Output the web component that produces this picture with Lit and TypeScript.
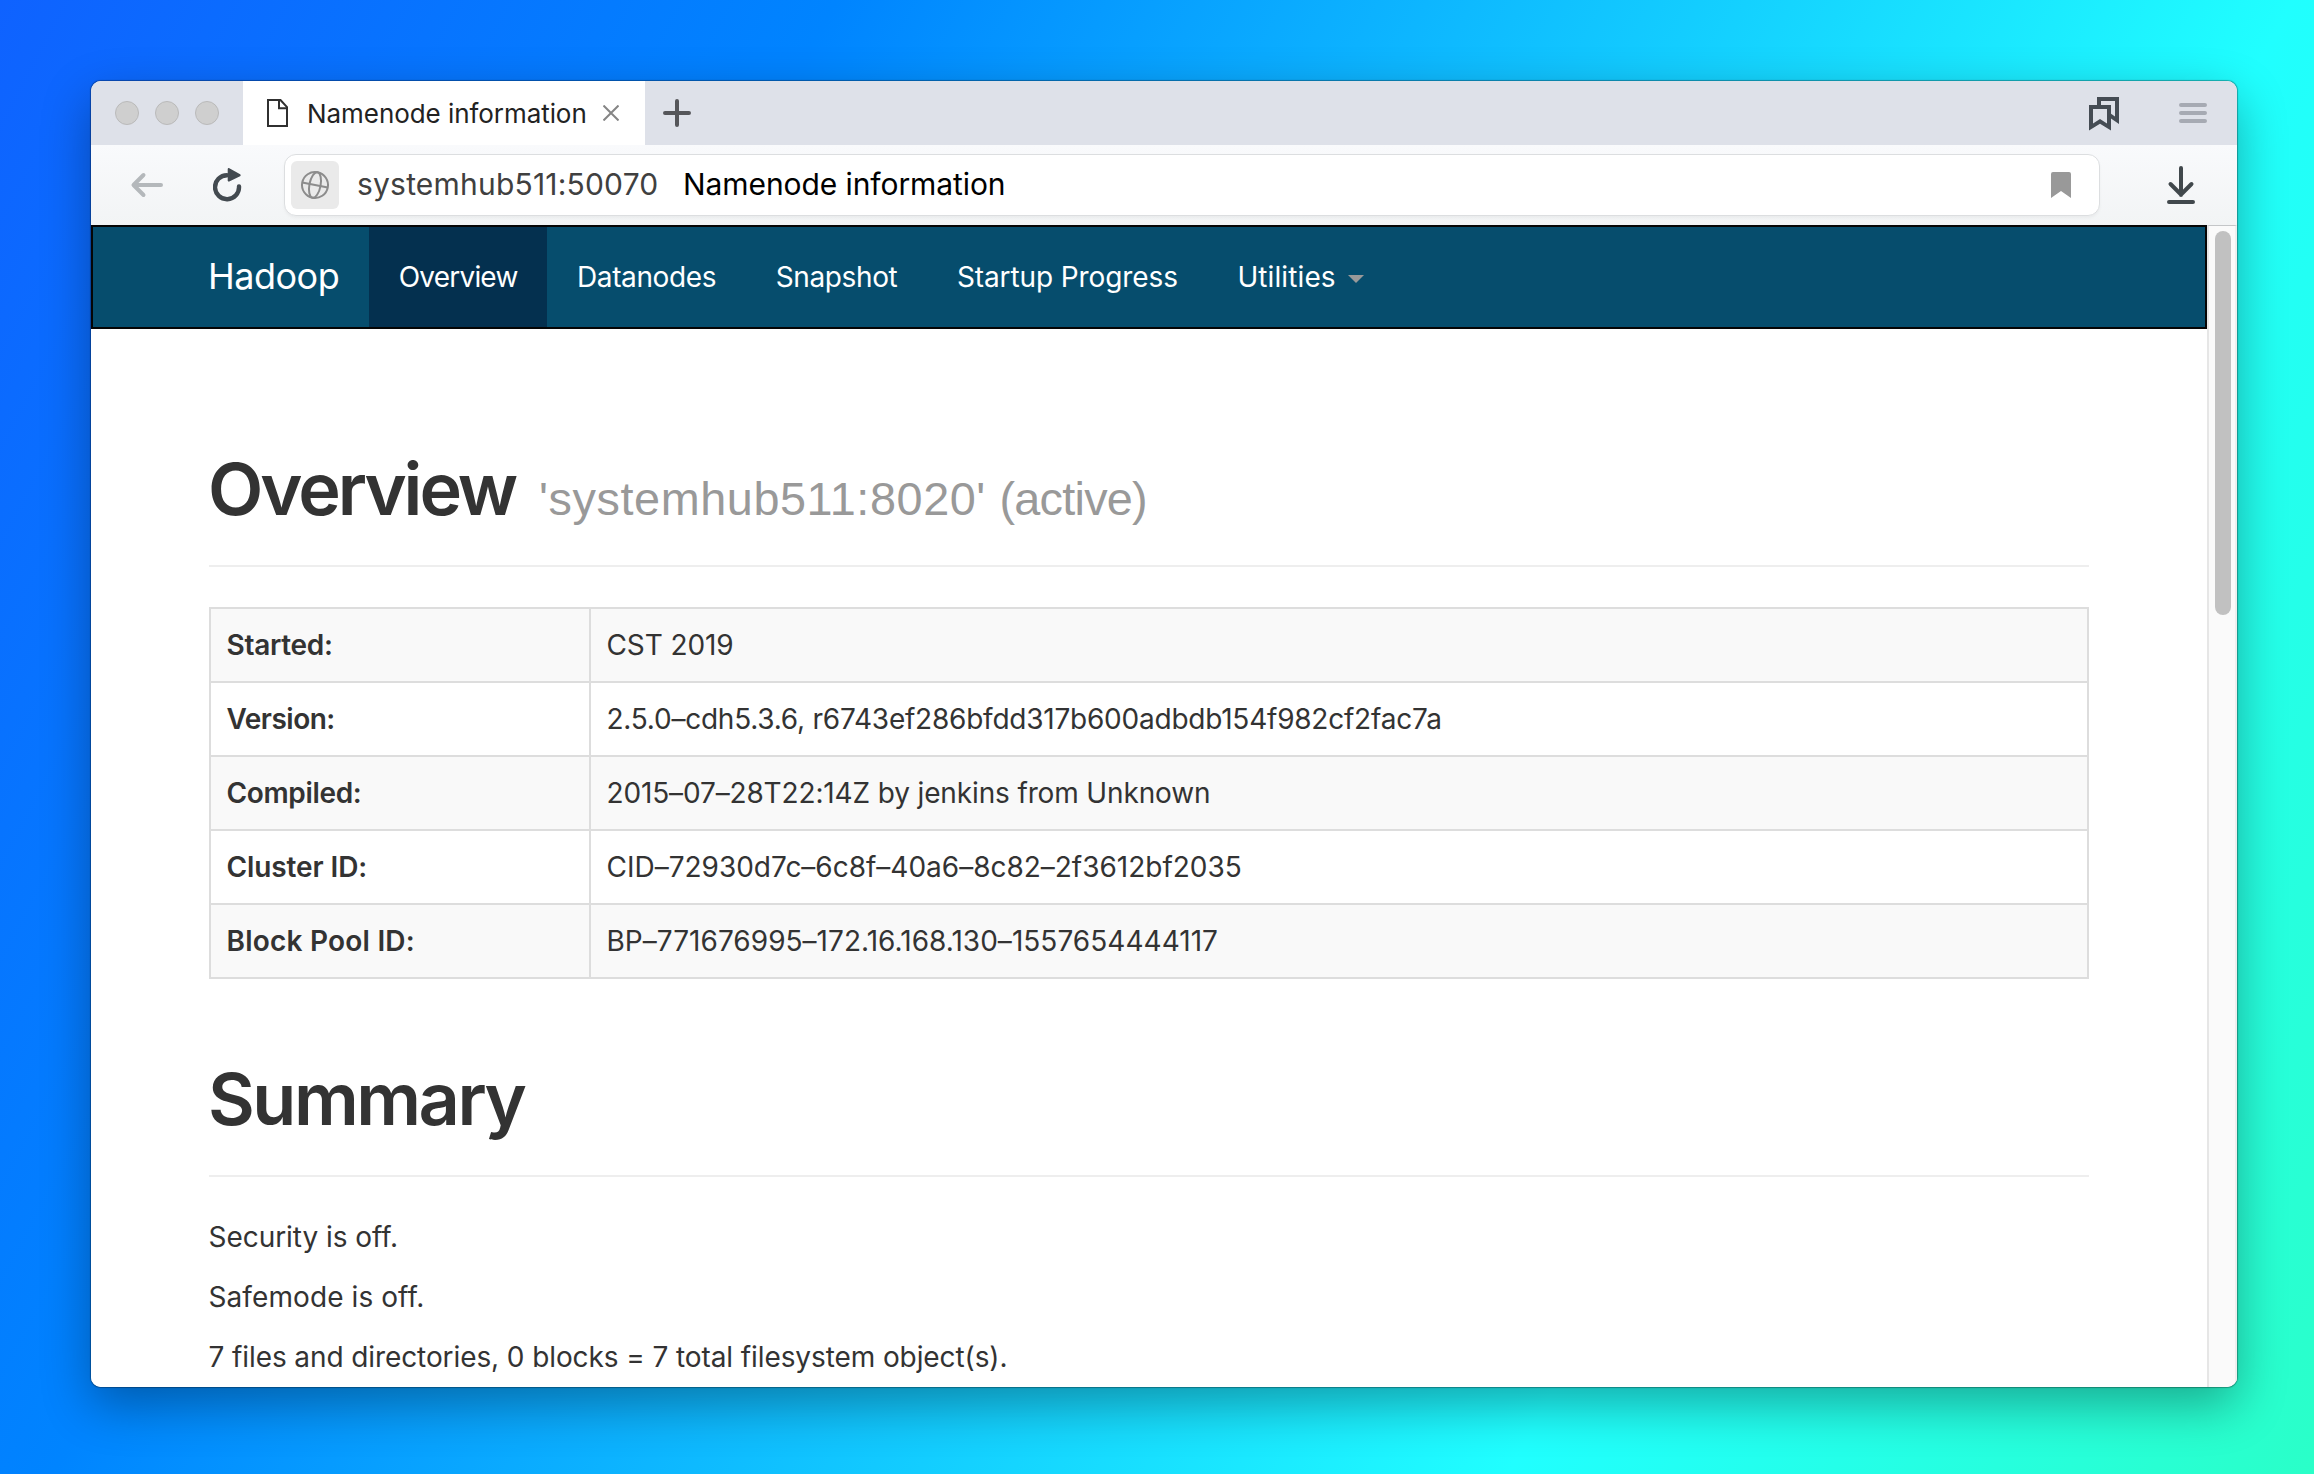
import { LitElement, html, css } from "lit";
import { customElement } from "lit/decorators.js";
import { classMap } from "lit/directives/class-map.js";

interface Label {
  text: string;
  /** letter-spacing in px */
  track: number;
}

const NAV: (Label & { active?: boolean; menu?: boolean })[] = [
  { text: "Overview", track: -0.8, active: true },
  { text: "Datanodes", track: -0.38 },
  { text: "Snapshot", track: -0.36 },
  { text: "Startup Progress", track: -0.1 },
  { text: "Utilities", track: 0.1, menu: true },
];

const ROWS: { name: Label; value: Label }[] = [
  { name: { text: "Started:", track: -0.3 }, value: { text: "CST 2019", track: -0.1 } },
  {
    name: { text: "Version:", track: -0.5 },
    value: { text: "2.5.0–cdh5.3.6, r6743ef286bfdd317b600adbdb154f982cf2fac7a", track: -0.23 },
  },
  {
    name: { text: "Compiled:", track: -0.34 },
    value: { text: "2015–07–28T22:14Z by jenkins from Unknown", track: -0.14 },
  },
  {
    name: { text: "Cluster ID:", track: -0.1 },
    value: { text: "CID–72930d7c–6c8f–40a6–8c82–2f3612bf2035", track: -0.01 },
  },
  {
    name: { text: "Block Pool ID:", track: 0.22 },
    value: { text: "BP–771676995–172.16.168.130–1557654444117", track: 0.03 },
  },
];

const NOTES: Label[] = [
  { text: "Security is off.", track: -0.05 },
  { text: "Safemode is off.", track: 0.09 },
  { text: "7 files and directories, 0 blocks = 7 total filesystem object(s).", track: -0.095 },
];

const spaced = (l: Label) => html`<span style="letter-spacing:${l.track}px">${l.text}</span>`;

@customElement("browser-chrome")
export class BrowserChrome extends LitElement {
  static styles = css`
    :host { display: block; flex: none; font-family: Inter, "Liberation Sans", sans-serif; }
    * { box-sizing: border-box; }
    svg { display: block; flex: none; }
    .tabs { height: 64px; display: flex; align-items: center; background: #dee1e9; }
    .lights { width: 152px; padding-left: 24px; display: flex; gap: 16px; flex: none; }
    .light { width: 24px; height: 24px; border-radius: 50%; background: #cfcfcf; border: 1px solid #bababa; }
    .tab {
      width: 402px; height: 64px; flex: none; display: flex; align-items: center;
      padding-left: 24px; background: #fff; color: #222; font-size: 26px; white-space: nowrap;
    }
    .title { width: 283px; margin-left: 19px; margin-right: 13px; letter-spacing: -.06px; }
    .plus { margin-left: 18px; }
    .right { margin-left: auto; display: flex; align-items: center; gap: 60px; padding-right: 30px; }
    .bookmarks { margin-top: 1px; }
    .bar {
      height: 80px; display: flex; align-items: center;
      background: linear-gradient(#f9fafc, #f2f4f5);
    }
    .back { margin-left: 39px; }
    .reload { margin-left: 50px; }
    .address {
      width: 1816px; height: 62px; margin-left: 41px; flex: none; display: flex; align-items: center;
      padding: 0 28px 0 6px; border: 1px solid #dcdee0; border-radius: 12px; background: #fff;
      box-shadow: 0 2px 3px rgba(0, 0, 0, .04); font-size: 30px; white-space: nowrap;
    }
    .chip {
      width: 48px; height: 48px; flex: none; display: flex; align-items: center; justify-content: center;
      border-radius: 6px; background: #eaeaea;
    }
    .url { margin-left: 18px; width: 326px; padding-bottom: 2px; color: #404040; letter-spacing: .2px; }
    .page { padding-bottom: 2px; color: #000; letter-spacing: -.08px; }
    .mark { margin-left: auto; }
    .download { margin: 0 0 1px 67px; }
  `;

  render() {
    return html`
      <div class="tabs">
        <div class="lights"><i class="light"></i><i class="light"></i><i class="light"></i></div>
        <div class="tab">
          <svg width="21" height="28" fill="none" stroke="#303030" stroke-width="2">
            <path d="M1 1H13.5L20 8.2V27H1Z" />
            <path d="M12 1.5V9.2H19.5" />
          </svg>
          <span class="title">Namenode information</span>
          <svg width="16" height="16" stroke="#858585" stroke-width="2"><path d="M.5 .5L15.5 15.5M15.5 .5L.5 15.5" /></svg>
        </div>
        <svg class="plus" width="28" height="28" stroke="#55565a" stroke-width="4" stroke-linecap="round">
          <path d="M14 2V26M2 14H26" />
        </svg>
        <div class="right">
          <svg class="bookmarks" width="30" height="34" fill="#454c54" fill-rule="evenodd">
            <path d="M0 8H22V33.5L11 26.8L0 33.5ZM4 12V26.4L11 21.9L18 26.4V12Z" />
            <path d="M8 8V0H30V27L22 21.5V16.8L26 19.4V4H12V8Z" />
          </svg>
          <svg width="28" height="20" stroke="#a6aab3" stroke-width="4" stroke-linecap="round">
            <path d="M2 2H26M2 10H26M2 18H26" />
          </svg>
        </div>
      </div>
      <div class="bar">
        <svg class="back" width="33" height="26" fill="none" stroke="#b4b8bb" stroke-width="4" stroke-linecap="round" stroke-linejoin="round">
          <path d="M31 13H4M13.5 3L3.5 13L13.5 23" />
        </svg>
        <svg class="reload" width="30" height="36" fill="none" stroke="#434a50" stroke-width="4.4" stroke-linecap="round">
          <path d="M26 19.5A12 12 0 1 1 14 8.2" />
          <path d="M15.8 2.2L26.6 8.2L15.8 13.4Z" fill="#434a50" stroke-width="2.2" stroke-linejoin="round" />
        </svg>
        <div class="address">
          <span class="chip">
            <svg width="30" height="30" viewBox="-15 -15 30 30" fill="none" stroke="#8c8c8c" stroke-width="2">
              <g transform="rotate(11)">
                <circle r="13" />
                <ellipse rx="5.6" ry="13" />
                <path d="M-13 0H13" />
              </g>
            </svg>
          </span>
          <span class="url">systemhub511:50070</span>
          <span class="page">Namenode information</span>
          <svg class="mark" width="20" height="26" fill="#999"><path d="M0 2Q0 0 2 0H18Q20 0 20 2V26L10 19L0 26Z" /></svg>
        </div>
        <svg class="download" width="28" height="38" fill="none" stroke="#41484c" stroke-width="4" stroke-linecap="round" stroke-linejoin="round">
          <path d="M14 2V29M3.5 18L14 28.5L24.5 18M2 36H26" />
        </svg>
      </div>
    `;
  }
}

@customElement("namenode-page")
export class NamenodePage extends LitElement {
  static styles = css`
    :host {
      display: block; width: 2116px; flex: none; overflow: hidden; background: #fff;
      color: #333; font: 28px/40px Inter, "Liberation Sans", sans-serif;
    }
    * { box-sizing: border-box; }
    .nav {
      height: 104px; padding-left: 115px; display: flex; align-items: stretch;
      background: #064d6d; border: 2px solid #050505; color: #fff; white-space: nowrap;
    }
    .brand { width: 161px; padding-bottom: 2px; display: flex; align-items: center; font-size: 36px; letter-spacing: -.5px; }
    .item { display: flex; align-items: center; padding: 0 29.75px; }
    .item.active { background: #04304f; }
    .caret { margin: 4px 0 0 12px; border: 8px solid transparent; border-top-color: #999; border-bottom: 0; }
    .content { padding: 120px 118px 0; }
    .heading {
      margin: 0; padding-bottom: 36px; border-bottom: 2px solid #eee; display: flex; align-items: baseline;
      font-size: 72px; line-height: 80px; font-weight: 600; white-space: nowrap;
    }
    .overview { margin-left: -1px; width: 331px; letter-spacing: -3.04px; }
    .summary { margin-left: -1px; letter-spacing: -2.5px; }
    .host {
      font: 400 46.8px/1 "Liberation Sans", sans-serif; color: #999; letter-spacing: .58px;
    }
    .state { letter-spacing: -.75px; }
    .table { margin: 40px 0 80px; border: 2px solid #ddd; border-bottom: 0; }
    .row { height: 74px; display: flex; border-bottom: 2px solid #ddd; white-space: nowrap; }
    .row:nth-child(odd) { background: #f9f9f9; }
    .name { width: 380px; padding: 16px 15.5px; border-right: 2px solid #ddd; font-weight: 600; }
    .value { padding: 16px 15.5px; }
    .notes { padding-top: 40px; display: flex; flex-direction: column; gap: 20px; white-space: nowrap; }
    .note { margin: 0 0 0 -.5px; }
  `;

  render() {
    return html`
      <nav class="nav">
        <span class="brand">Hadoop</span>
        ${NAV.map(
          (n) => html`<span class=${classMap({ item: true, active: !!n.active })}>
            ${spaced(n)}${n.menu ? html`<i class="caret"></i>` : null}
          </span>`
        )}
      </nav>
      <main class="content">
        <h1 class="heading">
          <span class="overview">Overview</span>
          <span class="host">'systemhub511:8020' <span class="state">(active)</span></span>
        </h1>
        <div class="table">
          ${ROWS.map(
            (r) => html`<div class="row">
              <div class="name">${spaced(r.name)}</div>
              <div class="value">${spaced(r.value)}</div>
            </div>`
          )}
        </div>
        <h1 class="heading"><span class="summary">Summary</span></h1>
        <div class="notes">${NOTES.map((n) => html`<p class="note">${spaced(n)}</p>`)}</div>
      </main>
    `;
  }
}

@customElement("app-root")
export class AppRoot extends LitElement {
  static styles = css`
    :host { display: block; }
    * { box-sizing: border-box; }
    .desktop {
      width: 2314px; height: 1474px; padding: 81px 77px 87px 91px; overflow: hidden;
      background: linear-gradient(118deg, #0f62ff 0%, #0084ff 27%, #20ffff 74%, #2affc8 100%);
    }
    .window {
      height: 1306px; border-radius: 10px; background: #fff;
      box-shadow: 0 0 1px 1px rgba(0, 0, 0, .3), 0 18px 50px rgba(0, 0, 0, .33);
    }
    .clip { height: 100%; display: flex; flex-direction: column; border-radius: 10px; overflow: hidden; }
    .view { flex: 1; min-height: 0; display: flex; }
    .scroll {
      width: 30px; flex: none; padding: 5px 4px 0 6px; background: #fafafa;
      border: solid #e6e6e6; border-width: 1px 2px 0 2px; border-top-color: #c4c6c8; border-right-color: #eee;
    }
    .thumb { width: 16px; height: 384px; border-radius: 8px; background: #c1c1c1; }
  `;

  render() {
    return html`
      <div class="desktop">
        <div class="window">
          <div class="clip">
            <browser-chrome></browser-chrome>
            <div class="view">
              <namenode-page></namenode-page>
              <div class="scroll"><div class="thumb"></div></div>
            </div>
          </div>
        </div>
      </div>
    `;
  }
}
